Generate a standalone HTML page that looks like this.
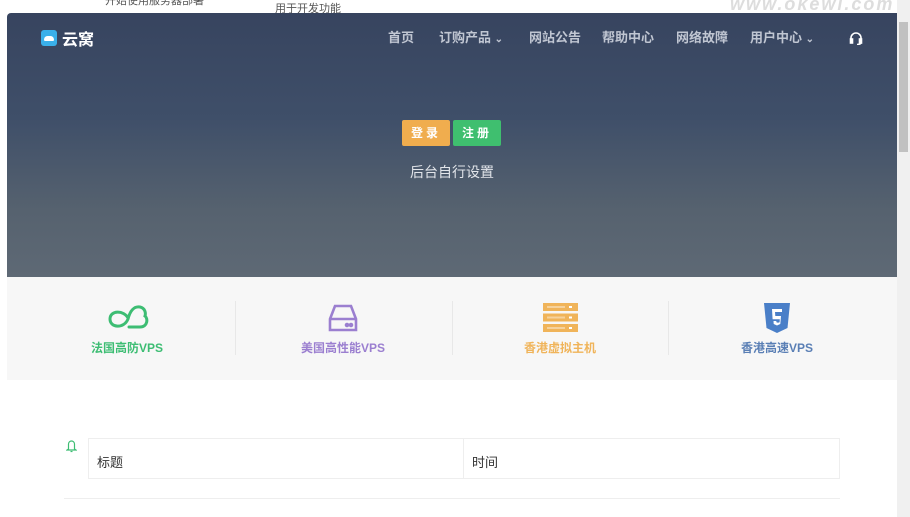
<!DOCTYPE html>
<html><head><meta charset="utf-8"><style>
*{margin:0;padding:0;box-sizing:border-box}
body{width:910px;height:517px;overflow:hidden;background:#fff;font-family:"Liberation Sans","Noto Sans CJK SC",sans-serif;position:relative}
.top{position:absolute;left:0;top:0;width:897px;height:13px;background:#fff;font-size:11px;color:#555}
.hero{position:absolute;left:7px;top:13px;width:890px;height:264px;background:linear-gradient(#37445f 0%,#3f4f69 40%,#56626f 75%,#5e6975 100%);border-radius:4px 0 0 0}
.logo{position:absolute;left:34px;top:13px;color:#fff;font-weight:bold;font-size:16px;display:flex;align-items:center}
.logo i{display:inline-block;width:16px;height:16px;background:#3ab0ea;border-radius:3px;margin-right:5px;position:relative}
.logo i:after{content:"";position:absolute;left:3px;top:6px;width:10px;height:5px;background:#fff;border-radius:5px 5px 2px 2px}
.nav{position:absolute;top:14px;font-size:13px;color:#c0c6d2;font-weight:bold}
.btn{position:absolute;top:107px;width:48px;height:26px;color:#fff;font-size:12px;font-weight:bold;text-align:center;line-height:26px;letter-spacing:3px;border-radius:2px}
.sub{position:absolute;top:149px;left:0;width:890px;text-align:center;color:#e2e5ea;font-size:14px}
.prod{position:absolute;left:7px;top:277px;width:890px;height:103px;background:#f7f7f7}
.p{position:absolute;top:62px;font-size:12px;font-weight:bold;text-align:center;width:150px}
.sep{position:absolute;top:24px;width:1px;height:54px;background:#e8e8e8}
.sb{position:absolute;left:897px;top:0;width:13px;height:517px;background:#f0f0f0}
.th{position:absolute;left:899px;top:22px;width:9px;height:130px;background:#c1c1c1}
table{position:absolute;left:88px;top:438px;width:752px;border-collapse:collapse;font-size:13px;color:#333}
td{border:1px solid #eee;height:40px;padding:0 8px;padding-top:6px}
</style></head><body>
<div class="top"><span style="position:absolute;left:105px;top:-8px">开始使用服务器部署</span><span style="position:absolute;left:275px;top:0">用于开发功能</span><span style="position:absolute;left:730px;top:-6px;font-size:18px;font-weight:bold;font-style:italic;color:#ddd;letter-spacing:2px">www.okewl.com</span></div>
<div class="hero">
<div class="logo"><i></i>云窝</div>
<div class="nav" style="left:381px">首页</div>
<div class="nav" style="left:432px">订购产品 <span style="font-size:10px">&#8964;</span></div>
<div class="nav" style="left:522px">网站公告</div>
<div class="nav" style="left:595px">帮助中心</div>
<div class="nav" style="left:669px">网络故障</div>
<div class="nav" style="left:743px">用户中心 <span style="font-size:10px">&#8964;</span></div>
<svg style="position:absolute;left:842px;top:18px" width="14" height="14" viewBox="0 0 14 14" fill="none" stroke="#fff" stroke-width="1.6"><path d="M2 9V7a5 5 0 0 1 10 0v2"/><rect x="1.5" y="8" width="2" height="4" fill="#fff"/><rect x="10.5" y="8" width="2" height="4" fill="#fff"/><path d="M12 12q-1 1.5-4 1.5"/></svg>
<div class="btn" style="left:395px;background:#f0ad4e">登录</div>
<div class="btn" style="left:446px;background:#3fbf6f">注册</div>
<div class="sub">后台自行设置</div>
</div>
<div class="prod">
<svg style="position:absolute;left:100px;top:26px" width="42" height="28" viewBox="0 0 42 28" fill="none" stroke="#3dbd73" stroke-width="3" stroke-linecap="round"><path d="M21 15C17 7 3 7 3 16c0 9 14 10 18 0 2-8 6-13 12-12 5 1 6 6 5 9 3 2 3 11-5 11H22"/></svg>
<div class="p" style="left:45px;color:#3dbd73">法国高防VPS</div>
<div class="sep" style="left:228px"></div>
<svg style="position:absolute;left:321px;top:27px" width="30" height="28" viewBox="0 0 30 28" fill="none" stroke="#9b7fd0" stroke-width="2.6"><path d="M7 2h16l5 13v11H2V15z"/><path d="M2 15h26"/><circle cx="19" cy="21" r="1" fill="#9b7fd0"/><circle cx="23" cy="21" r="1" fill="#9b7fd0"/></svg>
<div class="p" style="left:261px;color:#9b7fd0">美国高性能VPS</div>
<div class="sep" style="left:445px"></div>
<svg style="position:absolute;left:536px;top:26px" width="35" height="29" viewBox="0 0 35 29"><rect y="0" width="35" height="8" fill="#f0b45a"/><rect y="10.5" width="35" height="8" fill="#f0b45a"/><rect y="21" width="35" height="8" fill="#f0b45a"/><g fill="#fff"><rect x="26" y="3" width="3" height="2"/><rect x="26" y="13.5" width="3" height="2"/><rect x="26" y="24" width="3" height="2"/><rect x="4" y="3" width="18" height="2" opacity=".4"/><rect x="4" y="13.5" width="18" height="2" opacity=".4"/><rect x="4" y="24" width="18" height="2" opacity=".4"/></g></svg>
<div class="p" style="left:478px;color:#f0b45a">香港虚拟主机</div>
<div class="sep" style="left:661px"></div>
<svg style="position:absolute;left:757px;top:26px" width="26" height="30" viewBox="0 0 26 30"><path d="M0 0h26l-2.5 25L13 30 2.5 25z" fill="#4a7fc8"/><path d="M8 6h10v3h-7l.3 4H17l-.7 8L13 22.5 9.7 21l-.2-3h2.8l.1 1.2 1.6.5 1.6-.5.2-3H8.6z" fill="#fff"/></svg>
<div class="p" style="left:695px;color:#5a7fb5">香港高速VPS</div>
</div>
<svg style="position:absolute;left:66px;top:439px" width="11" height="14" viewBox="0 0 11 14" fill="none" stroke="#3dbd73" stroke-width="1.2"><path d="M2.5 10V5a3 3 0 0 1 6 0v5l1.5 1H1z"/><path d="M4.5 12.5h2"/></svg>
<table><tr><td style="width:375px">标题</td><td>时间</td></tr></table>
<div style="position:absolute;left:64px;top:498px;width:776px;height:1px;background:#eee"></div>
<div class="sb"></div><div class="th"></div>
</body></html>
